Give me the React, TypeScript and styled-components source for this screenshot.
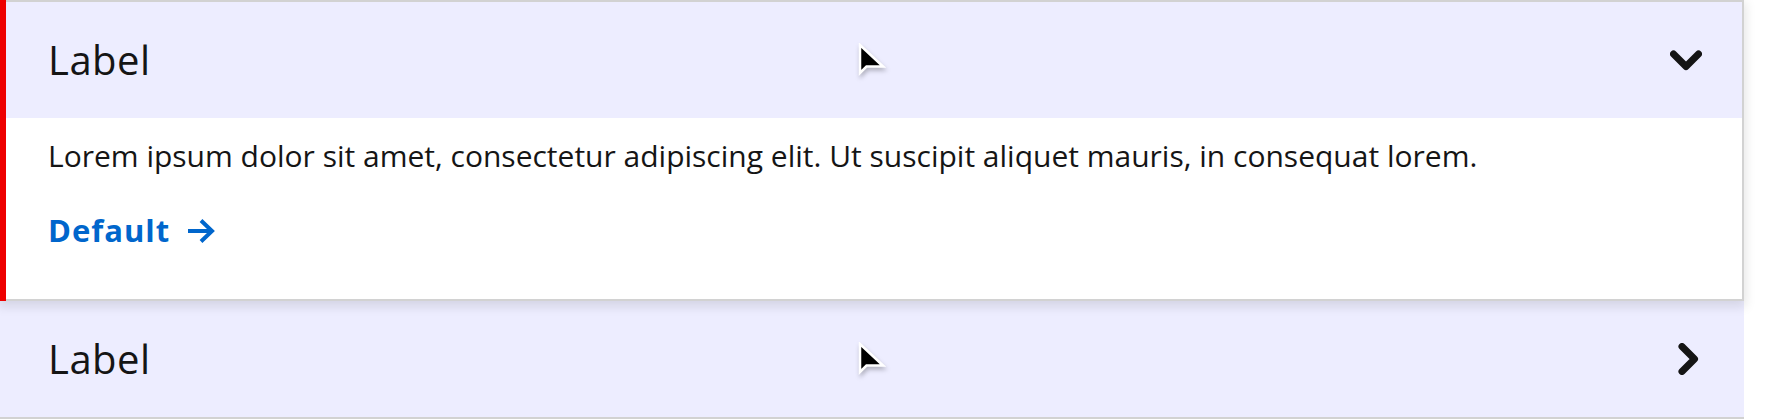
import React from 'react'
import styled, { createGlobalStyle } from 'styled-components'

const GlobalStyle = createGlobalStyle`
    body {
        margin: 0;
        background: #ffffff;
        font-family: 'Open Sans', 'Liberation Sans', sans-serif;
        color: #151515;
    }
`

const Accordion = styled.div`
    width: 1744px;
    display: flex;
    flex-direction: column;
`

const Item = styled.div<{ $expanded?: boolean }>`
    position: relative;
    z-index: ${(p) => (p.$expanded ? 1 : 0)};
    background: #ffffff;
    border-top: ${(p) => (p.$expanded ? '2px solid #d2d2d2' : 'none')};
    border-bottom: 2px solid #d2d2d2;
    border-right: ${(p) => (p.$expanded ? '2px solid #d2d2d2' : 'none')};
    box-shadow: ${(p) =>
        p.$expanded ? '0 4px 10px 2px rgba(0, 0, 0, 0.1)' : 'none'};

    ${(p) =>
        p.$expanded &&
        `
        &::before {
            content: '';
            position: absolute;
            left: 0;
            top: -2px;
            bottom: -2px;
            width: 6px;
            background: #ee0000;
            z-index: 2;
        }
    `}
`

const Header = styled.div`
    position: relative;
    display: flex;
    align-items: center;
    justify-content: space-between;
    padding: 28px 40px 28px 48px;
    background: #ededff;
`

const Label = styled.span`
    font-size: 40px;
    line-height: 60px;
    letter-spacing: 0.5px;
    font-weight: 400;
    color: #151515;
`

const Toggle = styled.span`
    display: flex;
    width: 32px;
    height: 32px;
    align-items: center;
    justify-content: center;
`

const Panel = styled.div`
    padding: 15px 48px 46px 48px;
`

const Text = styled.p`
    margin: 0 0 30px 0;
    font-size: 30px;
    line-height: 1.5;
`

const Link = styled.a`
    display: inline-flex;
    align-items: center;
    gap: 17px;
    font-size: 31px;
    line-height: 45px;
    letter-spacing: 1px;
    font-weight: 700;
    color: #0066cc;
    text-decoration: none;
`

const Cursor = styled.svg`
    position: absolute;
    left: 858px;
    top: 41px;
    filter: drop-shadow(1px 3px 2px rgba(0, 0, 0, 0.25));
`

const ChevronDown = () => (
    <svg width="32" height="32" viewBox="0 0 32 32">
        <polyline
            points="3.5,10 16,22.5 28.5,10"
            fill="none"
            stroke="#151515"
            strokeWidth="7"
            strokeLinecap="round"
            strokeLinejoin="round"
        />
    </svg>
)

const ChevronRight = () => (
    <svg width="32" height="32" viewBox="0 0 32 32">
        <polyline
            points="10,3.5 22.5,16 10,28.5"
            fill="none"
            stroke="#151515"
            strokeWidth="7"
            strokeLinecap="round"
            strokeLinejoin="round"
        />
    </svg>
)

const Arrow = () => (
    <svg width="28" height="26" viewBox="0 0 28 26">
        <line x1="1" y1="13" x2="24" y2="13" stroke="#0066cc" strokeWidth="4" />
        <polyline
            points="14,2.5 25,13 14,23.5"
            fill="none"
            stroke="#0066cc"
            strokeWidth="4"
        />
    </svg>
)

const Pointer = () => (
    <Cursor width="28" height="36" viewBox="0 0 28 36">
        <path
            d="M2 2 L2 30 L8.5 23.5 L25 23.5 Z"
            fill="#000000"
            stroke="#ffffff"
            strokeWidth="2.5"
            strokeLinejoin="miter"
        />
    </Cursor>
)

const App: React.FC = () => {
    return (
        <>
            <GlobalStyle />
            <Accordion>
                <Item $expanded>
                    <Header>
                        <Label>Label</Label>
                        <Toggle>
                            <ChevronDown />
                        </Toggle>
                        <Pointer />
                    </Header>
                    <Panel>
                        <Text>
                            Lorem ipsum dolor sit amet, consectetur adipiscing
                            elit. Ut suscipit aliquet mauris, in consequat lorem.
                        </Text>
                        <Link href="#">
                            Default
                            <Arrow />
                        </Link>
                    </Panel>
                </Item>
                <Item>
                    <Header>
                        <Label>Label</Label>
                        <Toggle>
                            <ChevronRight />
                        </Toggle>
                        <Pointer />
                    </Header>
                </Item>
            </Accordion>
        </>
    )
}

export default App
